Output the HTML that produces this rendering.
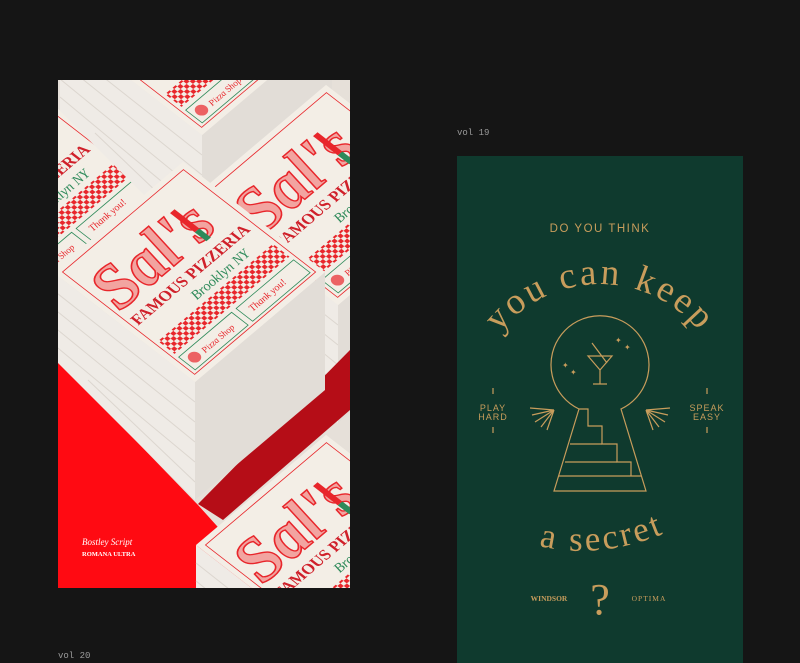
<!DOCTYPE html>
<html><head><meta charset="utf-8"><style>
html,body{margin:0;padding:0;background:#151515;width:800px;height:663px;overflow:hidden;position:relative;font-family:"Liberation Sans",sans-serif}
.vol{position:absolute;font-family:"Liberation Mono",monospace;font-size:9px;color:#9a9a9a;line-height:10px}
svg{position:absolute;display:block}
</style></head><body>
<div class="vol" style="left:457px;top:128px">vol 19</div>
<div class="vol" style="left:58px;top:651px">vol 20</div>

<svg style="left:58px;top:80px" width="292" height="508" viewBox="0 0 292 508">
<defs>
<clipPath id="c"><rect width="292" height="508"/></clipPath>
<pattern id="chk" width="8" height="8" patternUnits="userSpaceOnUse"><rect width="4" height="4" fill="#e8262b"/><rect x="4" y="4" width="4" height="4" fill="#e8262b"/></pattern>
<g id="lid">
<rect x="0" y="0" width="172" height="172" fill="#f3eee6"/>
<rect x="6" y="6" width="160" height="160" fill="none" stroke="#e8262b" stroke-width="0.8"/>
<text x="10" y="72" font-family="Liberation Serif,serif" font-style="italic" font-weight="bold" font-size="66" fill="#f2a4a0" stroke="#e8262b" stroke-width="1.5">Sal's</text>
<rect x="122" y="30" width="6" height="30" fill="#e8262b"/>
<rect x="122" y="60" width="6" height="14" fill="#2e8a5a"/>
<text x="10" y="94" font-family="Liberation Serif,serif" font-weight="bold" font-size="16" fill="#d0202a">FAMOUS PIZZERIA</text>
<text x="68" y="112" font-family="Liberation Serif,serif" font-style="italic" font-size="14" fill="#2e8a5a">Brooklyn NY</text>
<rect x="10" y="118" width="152" height="20" fill="url(#chk)"/>
<rect x="10" y="143" width="70" height="20" fill="none" stroke="#2e8a5a" stroke-width="0.8"/>
<text x="30" y="157" font-family="Liberation Serif,serif" font-style="italic" font-size="9" fill="#e8262b">Pizza Shop</text>
<circle cx="20" cy="153" r="6" fill="#e8262b" opacity="0.7"/>
<rect x="86" y="143" width="76" height="20" fill="none" stroke="#2e8a5a" stroke-width="0.8"/>
<text x="94" y="156" font-family="Liberation Serif,serif" font-style="italic" font-size="10" fill="#e8262b">Thank you!</text>
</g>
<g id="stack">
<polygon points="-5,192 137,302 137,420 -5,278" fill="#efebe6"/>
<g stroke="#dcd6cf" stroke-width="1"><line x1="-5" y1="210" x2="137" y2="322"/><line x1="-5" y1="228" x2="137" y2="342"/><line x1="-5" y1="246" x2="137" y2="362"/><line x1="-5" y1="264" x2="137" y2="382"/><line x1="30" y1="300" x2="137" y2="402"/></g>
<polygon points="137,302 267,192 267,310 137,420" fill="#e2ddd7"/>
<use href="#lid" transform="matrix(0.756,-0.64,0.826,0.64,-5,192)"/>
</g>
</defs>
<g clip-path="url(#c)">
<rect width="292" height="508" fill="#e6e0d9"/>
<polygon points="30,0 120,90 104,100 14,0" fill="#c4101a"/>
<polygon points="150,85 230,0 250,0 170,95" fill="#c4101a"/>
<use href="#stack" transform="translate(-160,-80)"/>
<use href="#stack" transform="translate(7,-247)"/>
<use href="#stack" transform="translate(143,-77)"/>
<polygon points="0,280 140,425 215,508 0,508" fill="#ff0a12"/>
<polygon points="140,424 292,270 292,330 165,440" fill="#b50d17"/>
<use href="#stack"/>
<use href="#stack" transform="translate(143,273)"/>
<text x="24" y="465" font-family="Liberation Serif,serif" font-style="italic" font-size="9" fill="#fff">Bostley Script</text>
<text x="24" y="476" font-family="Liberation Serif,serif" font-weight="bold" font-size="6.5" fill="#fff">ROMANA ULTRA</text>
</g>
</svg>

<svg style="left:457px;top:156px" width="286" height="507" viewBox="0 0 286 507">
<rect width="286" height="507" fill="#0f3a2e"/>
<defs>
<path id="arc1" d="M 28 200 A 128 128 0 0 1 258 200"/>
<path id="arc2" d="M 62 384 Q 140 412 228 368"/>
</defs>
<g fill="#c89d5c" font-family="Liberation Serif,serif">
<text x="143" y="76" text-anchor="middle" font-family="Liberation Sans,sans-serif" font-size="11.5" letter-spacing="1.5">DO YOU THINK</text>
<text font-size="37" letter-spacing="3"><textPath href="#arc1" startOffset="50%" text-anchor="middle">you can keep</textPath></text>
<text font-size="35" letter-spacing="3"><textPath href="#arc2" startOffset="50%" text-anchor="middle">a secret</textPath></text>
<text x="36" y="255" text-anchor="middle" font-family="Liberation Sans,sans-serif" font-size="9" letter-spacing="1">PLAY</text>
<text x="36" y="264" text-anchor="middle" font-family="Liberation Sans,sans-serif" font-size="9" letter-spacing="1">HARD</text>
<text x="250" y="255" text-anchor="middle" font-family="Liberation Sans,sans-serif" font-size="9" letter-spacing="1">SPEAK</text>
<text x="250" y="264" text-anchor="middle" font-family="Liberation Sans,sans-serif" font-size="9" letter-spacing="1">EASY</text>
<text x="92" y="445" text-anchor="middle" font-size="7.5" font-weight="bold">WINDSOR</text>
<text x="192" y="445" text-anchor="middle" font-size="7.5" letter-spacing="1">OPTIMA</text>
<text x="143" y="458" text-anchor="middle" font-size="44">?</text>
</g>
<g fill="none" stroke="#c89d5c" stroke-width="1.2">
<path d="M 122 253 A 49 49 0 1 1 164 253 L 189 335 L 97 335 Z"/>
<path d="M 122 253 L 131 253 L 131 270 L 145 270 L 145 288 L 160 288 L 160 306 L 174 306 L 174 320"/>
<line x1="113" y1="288" x2="145" y2="288"/><line x1="108" y1="306" x2="160" y2="306"/><line x1="102" y1="320" x2="184" y2="320"/>
<path d="M 131 200 L 155 200 L 143 214 Z M 143 214 L 143 228 M 136 228 L 150 228 M 135 187 L 150 207"/>
<line x1="36" y1="232" x2="36" y2="238"/><line x1="36" y1="271" x2="36" y2="277"/>
<line x1="250" y1="232" x2="250" y2="238"/><line x1="250" y1="271" x2="250" y2="277"/>
<path d="M 97 254 L 73 252 M 97 254 L 75 259 M 97 254 L 78 266 M 97 254 L 84 271 M 97 254 L 90 274"/>
<path d="M 189 254 L 213 252 M 189 254 L 211 259 M 189 254 L 208 266 M 189 254 L 202 271 M 189 254 L 196 274"/>
</g>
<g fill="#c89d5c" font-size="8" font-family="DejaVu Sans,sans-serif"><text x="158" y="187">✦</text><text x="167" y="194">✦</text><text x="105" y="212">✦</text><text x="113" y="219">✦</text></g>
</svg>
</body></html>
